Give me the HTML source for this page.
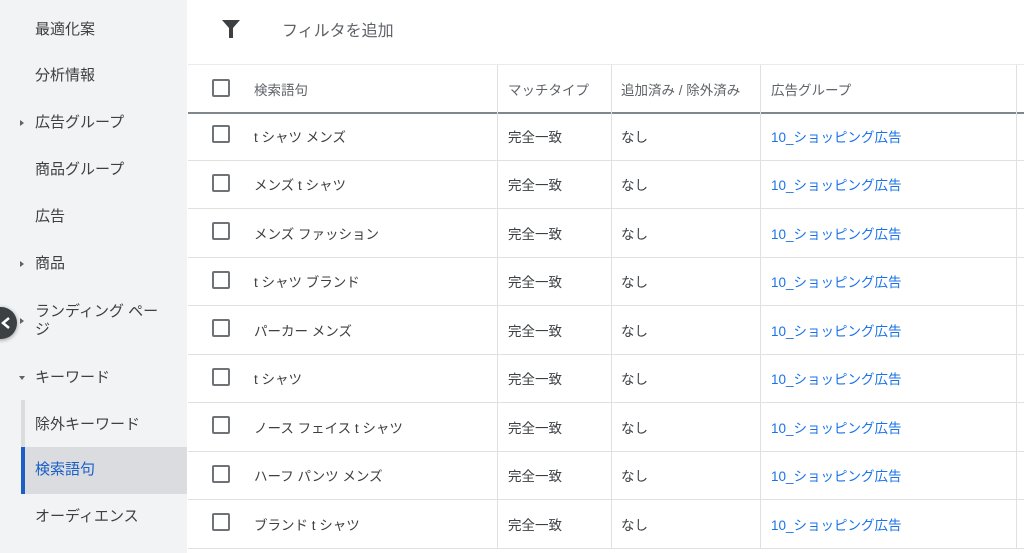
<!DOCTYPE html>
<html><head><meta charset="utf-8"><style>
*{margin:0;padding:0;box-sizing:border-box}
body{width:1024px;height:551px;overflow:hidden;background:#fff;font-family:"Liberation Sans","Noto Sans CJK JP",sans-serif;position:relative}
#side{position:absolute;left:0;top:2px;width:187px;height:551px;background:#f1f3f4}
.si{position:absolute;left:35px;font-size:15px;color:#3c4043;line-height:18px}
.tri{position:absolute;left:20px;width:0;height:0;border-top:3.5px solid transparent;border-bottom:3.5px solid transparent;border-left:4px solid #5f6368}
#main{position:absolute;left:188px;top:0;right:0;height:551px}
.row{position:absolute;left:0;right:0;height:48.5px;border-bottom:1px solid #e0e0e0;font-size:13.5px;color:#3c4043}
.cb{position:absolute;left:24px;top:13px;width:18px;height:18px;border:2px solid #6f7377;border-radius:2px}
.c{position:absolute;top:0;bottom:0;display:flex;align-items:center}
.v{position:absolute;top:0;bottom:0;width:1px;background:#e0e0e0}
a{color:#1a73e8;text-decoration:none}
</style></head><body>
<div style="position:absolute;left:0;top:0;width:187px;height:551px;background:#f1f3f4"></div>
<div id="side">
<div class="si" style="top:19px">最適化案</div>
<div class="si" style="top:65px">分析情報</div>
<div class="tri" style="top:118px"></div><div class="si" style="top:112px">広告グループ</div>
<div class="si" style="top:159px">商品グループ</div>
<div class="si" style="top:206px">広告</div>
<div class="tri" style="top:259px"></div><div class="si" style="top:253px">商品</div>
<div class="tri" style="top:316px"></div><div class="si" style="top:301px;width:140px">ランディング ペー<br>ジ</div>
<div style="position:absolute;left:19px;top:374px;border-left:3.5px solid transparent;border-right:3.5px solid transparent;border-top:4px solid #5f6368"></div><div class="si" style="top:367px">キーワード</div>
<div style="position:absolute;left:21px;top:398px;width:4px;height:47px;background:#dadce0"></div>
<div class="si" style="top:414px">除外キーワード</div>
<div style="position:absolute;left:21px;top:445px;width:166px;height:47px;background:#dadce0"></div>
<div style="position:absolute;left:21px;top:445px;width:4px;height:47px;background:#1a5fc8"></div>
<div class="si" style="top:459px;color:#1a5fc8">検索語句</div>
<div class="si" style="top:506px">オーディエンス</div>
</div>
<div style="position:absolute;left:-15px;top:307px;width:32px;height:32px;border-radius:50%;background:#3c4043;box-shadow:0 1px 4px rgba(0,0,0,.4)"></div>
<svg style="position:absolute;left:0;top:316px" width="12" height="14"><path d="M9 2 L3 7 L9 12" stroke="#fff" stroke-width="2.5" fill="none"/></svg>
<div id="main">
<div style="position:absolute;left:0;right:0;top:0;height:65px;border-bottom:1px solid #e8eaed">
<svg style="position:absolute;left:34px;top:20px" width="18" height="18" viewBox="0 0 18 18"><path d="M0 0H18L11 8V18H7V8Z" fill="#3c4043"/></svg>
<div style="position:absolute;left:94px;top:17px;font-size:16px;color:#5f6368">フィルタを追加</div>
</div>
<div class="row" style="top:65px;height:49px;border-bottom:2px solid #80868b;color:#5f6368">
<div class="cb" style="top:14px"></div>
<div class="c" style="left:66px">検索語句</div>
<div class="v" style="left:309px"></div><div class="c" style="left:320px">マッチタイプ</div>
<div class="v" style="left:423px"></div><div class="c" style="left:433px">追加済み / 除外済み</div>
<div class="v" style="left:572px"></div><div class="c" style="left:583px">広告グループ</div>
<div class="v" style="left:828px"></div>
</div>
<div class="row" style="top:112px"><div class="cb"></div><div class="c" style="left:66px">t シャツ メンズ</div><div class="v" style="left:309px"></div><div class="c" style="left:320px">完全一致</div><div class="v" style="left:423px"></div><div class="c" style="left:433px">なし</div><div class="v" style="left:572px"></div><div class="c" style="left:583px"><a>10_ショッピング広告</a></div><div class="v" style="left:828px"></div></div>
<div class="row" style="top:160.5px"><div class="cb"></div><div class="c" style="left:66px">メンズ t シャツ</div><div class="v" style="left:309px"></div><div class="c" style="left:320px">完全一致</div><div class="v" style="left:423px"></div><div class="c" style="left:433px">なし</div><div class="v" style="left:572px"></div><div class="c" style="left:583px"><a>10_ショッピング広告</a></div><div class="v" style="left:828px"></div></div>
<div class="row" style="top:209px"><div class="cb"></div><div class="c" style="left:66px">メンズ ファッション</div><div class="v" style="left:309px"></div><div class="c" style="left:320px">完全一致</div><div class="v" style="left:423px"></div><div class="c" style="left:433px">なし</div><div class="v" style="left:572px"></div><div class="c" style="left:583px"><a>10_ショッピング広告</a></div><div class="v" style="left:828px"></div></div>
<div class="row" style="top:257.5px"><div class="cb"></div><div class="c" style="left:66px">t シャツ ブランド</div><div class="v" style="left:309px"></div><div class="c" style="left:320px">完全一致</div><div class="v" style="left:423px"></div><div class="c" style="left:433px">なし</div><div class="v" style="left:572px"></div><div class="c" style="left:583px"><a>10_ショッピング広告</a></div><div class="v" style="left:828px"></div></div>
<div class="row" style="top:306px"><div class="cb"></div><div class="c" style="left:66px">パーカー メンズ</div><div class="v" style="left:309px"></div><div class="c" style="left:320px">完全一致</div><div class="v" style="left:423px"></div><div class="c" style="left:433px">なし</div><div class="v" style="left:572px"></div><div class="c" style="left:583px"><a>10_ショッピング広告</a></div><div class="v" style="left:828px"></div></div>
<div class="row" style="top:354.5px"><div class="cb"></div><div class="c" style="left:66px">t シャツ</div><div class="v" style="left:309px"></div><div class="c" style="left:320px">完全一致</div><div class="v" style="left:423px"></div><div class="c" style="left:433px">なし</div><div class="v" style="left:572px"></div><div class="c" style="left:583px"><a>10_ショッピング広告</a></div><div class="v" style="left:828px"></div></div>
<div class="row" style="top:403px"><div class="cb"></div><div class="c" style="left:66px">ノース フェイス t シャツ</div><div class="v" style="left:309px"></div><div class="c" style="left:320px">完全一致</div><div class="v" style="left:423px"></div><div class="c" style="left:433px">なし</div><div class="v" style="left:572px"></div><div class="c" style="left:583px"><a>10_ショッピング広告</a></div><div class="v" style="left:828px"></div></div>
<div class="row" style="top:451.5px"><div class="cb"></div><div class="c" style="left:66px">ハーフ パンツ メンズ</div><div class="v" style="left:309px"></div><div class="c" style="left:320px">完全一致</div><div class="v" style="left:423px"></div><div class="c" style="left:433px">なし</div><div class="v" style="left:572px"></div><div class="c" style="left:583px"><a>10_ショッピング広告</a></div><div class="v" style="left:828px"></div></div>
<div class="row" style="top:500px"><div class="cb"></div><div class="c" style="left:66px">ブランド t シャツ</div><div class="v" style="left:309px"></div><div class="c" style="left:320px">完全一致</div><div class="v" style="left:423px"></div><div class="c" style="left:433px">なし</div><div class="v" style="left:572px"></div><div class="c" style="left:583px"><a>10_ショッピング広告</a></div><div class="v" style="left:828px"></div></div>
</div>
</body></html>
